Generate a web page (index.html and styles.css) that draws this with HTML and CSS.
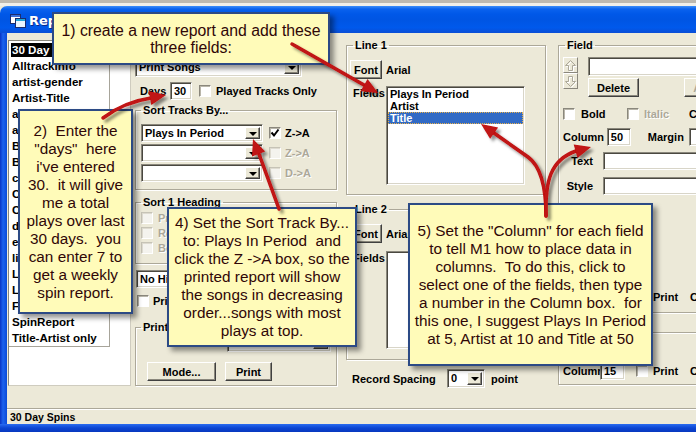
FILE: index.html
```html
<!DOCTYPE html>
<html lang="en">
<head>
	<meta charset="utf-8">
	<title>Reports</title>
	<link rel="stylesheet" href="styles.css">
</head>
<body>
	<div class="desk"></div>

	<div class="window">
		<div class="titlebar">
			<svg class="app-icon" width="16" height="16" viewBox="0 0 16 16">
				<rect x="0.5" y="2.5" width="10" height="9" fill="#fff" stroke="#1b2d6e"/>
				<rect x="1" y="3" width="9" height="2" fill="#3c6fd6"/>
				<rect x="5.5" y="6.5" width="10" height="9" fill="#eaf6ff" stroke="#1b2d6e"/>
				<rect x="6" y="7" width="9" height="2" fill="#23a7d9"/>
			</svg>
			<span class="caption">Reports</span>
		</div>

		<div class="frame">
			<div class="client">
				<div class="main">

					<!-- saved reports -->
					<div class="report-pane">
						<ul class="report-list">
							<li class="sel">30 Day Spins</li>
							<li>Alltrackinfo</li>
							<li>artist-gender</li>
							<li>Artist-Title</li>
							<li>album-list</li>
							<li>artist-count</li>
							<li>Best of Year</li>
							<li>BPM List</li>
							<li>catalog</li>
							<li>Category</li>
							<li>Count by Artist</li>
							<li>daily-log</li>
							<li>era-list</li>
							<li>likes</li>
							<li>Last Played</li>
							<li>Length</li>
							<li>Full Info</li>
							<li>SpinReport</li>
							<li>Title-Artist only</li>
						</ul>
					</div>

					<!-- what to print / sorting -->
					<div class="col-sort">
						<div class="combo w-songs"><span class="val">Print Songs</span><i class="drop"></i></div>

						<div class="days-row">
							<span class="lbl-days">Days</span>
							<span class="edit w-days">30</span>
							<span class="check"></span>
							<span class="cap">Played Tracks Only</span>
						</div>

						<fieldset class="grp grp-sort">
							<legend>Sort Tracks By...</legend>
							<div class="sort-row">
								<div class="combo w-sort"><span class="val">Plays In Period</span><i class="drop"></i></div>
								<span class="check on"><svg width="10" height="10" viewBox="0 0 10 10"><polyline points="1.5,4.5 4,7.5 8.5,1.5" fill="none" stroke="#000" stroke-width="2"/></svg></span>
								<span class="cap">Z-&gt;A</span>
							</div>
							<div class="sort-row">
								<div class="combo w-sort"><span class="val"></span><i class="drop"></i></div>
								<span class="check off"></span>
								<span class="cap dis">Z-&gt;A</span>
							</div>
							<div class="sort-row">
								<div class="combo w-sort"><span class="val"></span><i class="drop"></i></div>
								<span class="check off"></span>
								<span class="cap dis">D-&gt;A</span>
							</div>
						</fieldset>

						<fieldset class="grp grp-head">
							<legend>Sort 1 Heading</legend>
							<div class="chk-row"><span class="check off"></span><span class="cap dis">Print heading</span></div>
							<div class="chk-row"><span class="check off"></span><span class="cap dis">Repeat on page</span></div>
							<div class="chk-row"><span class="check off"></span><span class="cap dis">Box heading</span></div>
						</fieldset>

						<div class="combo w-hilite"><span class="val">No Highlight</span><i class="drop"></i></div>

						<div class="chk-row totals"><span class="check"></span><span class="cap">Print Totals</span></div>

						<fieldset class="grp grp-print">
							<legend>Print Range</legend>
							<div class="print-top">
								<div class="combo w-printer"><span class="val"></span><i class="drop"></i></div>
							</div>
							<div class="btn-row">
								<span class="btn w-mode">Mode...</span>
								<span class="btn w-print">Print</span>
							</div>
						</fieldset>
					</div>

					<!-- report lines -->
					<div class="col-lines">
						<fieldset class="grp grp-line line-1">
							<legend>Line 1</legend>
							<div class="font-row">
								<span class="btn w-font">Font</span>
								<span class="cap font-name">Arial</span>
							</div>
							<div class="fields-row">
								<span class="lbl-fields">Fields</span>
								<ul class="lst">
									<li>Plays In Period</li>
									<li>Artist</li>
									<li class="sel">Title</li>
								</ul>
							</div>
						</fieldset>

						<fieldset class="grp grp-line line-2">
							<legend>Line 2</legend>
							<div class="font-row">
								<span class="btn w-font">Font</span>
								<span class="cap font-name">Arial</span>
							</div>
							<div class="fields-row">
								<span class="lbl-fields">Fields</span>
								<ul class="lst"></ul>
							</div>
						</fieldset>

						<div class="spacing-row">
							<span class="lbl-spacing">Record Spacing</span>
							<div class="combo w-spacing"><span class="val">0</span><i class="drop"></i></div>
							<span class="cap unit">point</span>
						</div>
					</div>

					<!-- selected field -->
					<div class="col-field">
						<fieldset class="grp grp-field">
							<legend>Field</legend>
							<div class="row-a">
								<div class="spin">
									<span class="spin-btn"><svg width="13" height="13" viewBox="0 0 13 13"><path d="M6.5 1.5 L11.5 6.5 H8.5 V11.5 H4.5 V6.5 H1.5 Z" fill="none" stroke="#fff" transform="translate(1 1)"/><path d="M6.5 1.5 L11.5 6.5 H8.5 V11.5 H4.5 V6.5 H1.5 Z" fill="none" stroke="#aca899"/></svg></span>
									<span class="spin-btn"><svg width="13" height="13" viewBox="0 0 13 13"><path d="M6.5 11.5 L11.5 6.5 H8.5 V1.5 H4.5 V6.5 H1.5 Z" fill="none" stroke="#fff" transform="translate(1 1)"/><path d="M6.5 11.5 L11.5 6.5 H8.5 V1.5 H4.5 V6.5 H1.5 Z" fill="none" stroke="#aca899"/></svg></span>
								</div>
								<div class="edit-stack">
									<span class="edit w-name"></span>
									<div class="btn-pair">
										<span class="btn w-delete">Delete</span>
										<span class="btn w-add">Add</span>
									</div>
								</div>
							</div>

							<div class="row-b">
								<span class="check"></span><span class="cap w-bold">Bold</span>
								<span class="check"></span><span class="cap dis w-italic">Italic</span>
								<span class="cap">Caps</span>
							</div>

							<div class="row-c">
								<span class="lbl w-col">Column</span>
								<span class="edit w-num">50</span>
								<span class="lbl w-margin">Margin</span>
								<span class="edit w-num"></span>
							</div>

							<div class="row-d">
								<span class="lbl w-side">Text</span>
								<span class="edit w-text"></span>
							</div>
							<div class="row-e">
								<span class="lbl w-side">Style</span>
								<span class="edit w-text"></span>
							</div>

							<div class="row-f">
								<span class="lbl w-clip"></span>
								<span class="edit w-num"></span>
								<span class="check"></span>
								<span class="cap w-prt">Print</span>
								<span class="cap">Caps</span>
							</div>
							<div class="sep"></div>
							<div class="sep sep-2"></div>
							<div class="row-g">
								<span class="lbl w-clip">Column</span>
								<span class="edit w-num">15</span>
								<span class="check"></span>
								<span class="cap w-prt">Print</span>
								<span class="cap">Caps</span>
							</div>
						</fieldset>
					</div>

				</div>
				<div class="status">30 Day Spins</div>
			</div>
		</div>
	</div>

	<!-- notes laid over the dialog -->
	<div class="note n1">1) create a new report and add these<br>three fields:</div>
	<div class="note n2">2)&nbsp; Enter the<br>"days"&nbsp; here<br>i've entered<br>30.&nbsp; it will give<br>me a total<br>plays over last<br>30 days.&nbsp; you<br>can enter 7 to<br>get a weekly<br>spin report.</div>
	<div class="note n4">4) Set the Sort Track By...<br>to: Plays In Period&nbsp; and<br>click the Z -&gt;A box, so the<br>printed report will show<br>the songs in decreasing<br>order...songs with most<br>plays at top.</div>
	<div class="note n5">5) Set the "Column" for each field<br>to tell M1 how to place data in<br>columns.&nbsp; To do this, click to<br>select one of the fields, then type<br>a number in the Column box.&nbsp; for<br>this one, I suggest Plays In Period<br>at 5, Artist at 10 and Title at 50</div>

	<svg class="marks" width="696" height="432" viewBox="0 0 696 432">
		<defs>
			<filter id="drop-sh" x="-10%" y="-10%" width="120%" height="120%">
				<feDropShadow dx="3" dy="3" stdDeviation="1.6" flood-color="#000" flood-opacity=".45"/>
			</filter>
		</defs>
		<g filter="url(#drop-sh)" fill="#c01212" stroke="#c01212" stroke-linecap="round" stroke-width="3.5">
			<!-- days -->
			<path d="M103,118 Q124,102 151,98" fill="none"/>
			<polygon points="166,95 151.3,104.9 148.7,91.1" stroke="none"/>
			<!-- fields -->
			<path d="M292,44 L364,85" fill="none"/>
			<polygon points="378,93 360.6,91.2 367.6,79" stroke="none"/>
			<!-- sort dropdown -->
			<path d="M279,209 L259,154" fill="none"/>
			<polygon points="253,139 265.1,151.6 252,156.4" stroke="none"/>
			<!-- title -->
			<path d="M546,216 Q546,170 528,157 L494,133" fill="none"/>
			<polygon points="481,124 498.1,127.4 490.1,138.8" stroke="none"/>
			<!-- column -->
			<path d="M546,216 C545,182 550,160 576,151" fill="none"/>
			<polygon points="591,147 577.5,158 573.7,144.6" stroke="none"/>
		</g>
	</svg>
</body>
</html>
```

FILE: styles.css
```css
/* global */
* { box-sizing: border-box; }
html, body { margin: 0; }
body {
	position: relative;
	width: 696px;
	height: 432px;
	overflow: hidden;
	background: #ece9d8;
	color: #000;
	font-family: "Liberation Sans", Arial, sans-serif;
	font-size: 11px;
	font-weight: bold;
	white-space: nowrap;
}
ul { list-style: none; margin: 0; padding: 0; }

/* window chrome */
.desk { height: 6px; background: linear-gradient(#bdb9b0 0, #bdb9b0 3px, #f1efe8 3px); }
.window { display: flex; flex-direction: column; height: 426px; }
.titlebar {
	display: flex;
	align-items: center;
	flex: none;
	height: 27px;
	padding: 1px 0 0 10px;
	border-radius: 7px 0 0 0;
	background: linear-gradient(#3d8ef8 0, #0a62ee 3px, #0058e8 8px, #0055e3 50%, #0059ec 80%, #0a4ed6 100%);
	color: #fff;
}
.titlebar .app-icon { margin-right: 3px; }
.titlebar .caption {
	font-family: "DejaVu Sans", sans-serif;
	font-size: 13px;
	font-weight: bold;
	text-shadow: 1px 1px #0b2a8c;
}
.frame {
	display: flex;
	flex: 1;
	padding: 0 0 8px 7px;
	background:
		linear-gradient(transparent calc(100% - 8px), #2a6cf0 calc(100% - 8px), #0b45d2 calc(100% - 4px), #0838bf 100%),
		linear-gradient(90deg, #0833c4 0, #1c63ee 3px, #0a4ad8 7px);
}
.client { display: flex; flex-direction: column; flex: 1; overflow: hidden; background: #ece9d8; }
.main { display: flex; align-items: flex-start; flex: 1; }
.status {
	flex: none;
	height: 16px;
	padding: 1px 0 0 3px;
	border-top: 1px solid #aca899;
	box-shadow: inset 0 1px 0 #fff;
	font-size: 10.5px;
	line-height: 14px;
}

/* controls */
.cap { line-height: 12px; }
.cap.dis, .lbl.dis { color: #aca899; text-shadow: 1px 1px #fff; }
.lbl { line-height: 12px; }

.edit, .combo, .lst {
	background: #fff;
	border: 1px solid;
	border-color: #8a877c #fff #fff #8a877c;
	box-shadow: inset 1px 1px 0 #4a4840, inset -1px -1px 0 #d8d5c8;
}
.edit { display: block; height: 18px; padding: 2px 0 0 3px; line-height: 13px; }

.combo { display: flex; align-items: stretch; height: 18px; padding: 2px; }
.combo .val { flex: 1; padding-left: 1px; line-height: 13px; overflow: hidden; }
.combo .drop {
	display: flex;
	align-items: center;
	justify-content: center;
	width: 15px;
	background: #ece9d8;
	border: 1px solid;
	border-color: #fff #404040 #404040 #fff;
	box-shadow: inset -1px -1px 0 #8a877c;
}
.combo .drop:after {
	content: "";
	border: 4px solid transparent;
	border-top: 4px solid #000;
	border-bottom: 0;
	margin-top: 1px;
}

.check {
	display: inline-flex;
	align-items: center;
	justify-content: center;
	flex: none;
	width: 12px;
	height: 12px;
	background: #fff;
	border: 1px solid;
	border-color: #8a877c #fff #fff #8a877c;
	box-shadow: inset 1px 1px 0 #b9b6aa;
}
.check.off { background: #f4f3ee; border-color: #c6c3b6 #fff #fff #c6c3b6; box-shadow: inset 1px 1px 0 #dedbd0; }

.btn {
	display: flex;
	align-items: center;
	justify-content: center;
	height: 19px;
	background: #ece9d8;
	border: 1px solid;
	border-color: #fff #404040 #404040 #fff;
	box-shadow: inset -1px -1px 0 #8a877c;
}

/* group boxes */
fieldset.grp {
	min-width: 0;
	margin: 0;
	border: 1px solid #aca899;
	box-shadow: inset 1px 1px 0 #fff, 1px 1px 0 #fff;
}
fieldset.grp legend { padding: 0 2px; line-height: 12px; }

/* report list */
.report-pane {
	flex: none;
	width: 123px;
	height: 346px;
	margin: 7px 0 0 1px;
	background: #fff;
	border: 1px solid;
	border-color: #8a877c #cfccbf #cfccbf #8a877c;
}
.report-list {
	width: 101px;
	padding-top: 1px;
	border-right: 1px solid #a7a49a;
	border-bottom: 1px solid #a7a49a;
	font-size: 11.6px;
}
.report-list li { height: 16px; margin: 0 1px; padding-left: 2px; line-height: 16px; overflow: hidden; }
.report-list li.sel { background: #000; color: #fff; box-shadow: inset 0 0 0 1px #fff; }

/* sort column */
.col-sort { flex: none; width: 203px; margin-left: 4px; }
.col-sort .w-songs { width: 167px; height: 19px; margin-top: 25px; }
.days-row { display: flex; align-items: center; height: 18px; margin-top: 5px; }
.days-row .lbl-days { width: 35px; padding-left: 5px; }
.days-row .w-days { width: 22px; }
.days-row .check { margin-left: 7px; }
.days-row .cap { margin-left: 5px; }

.grp-sort { width: 202px; margin-top: 4px !important; padding: 8px 5px 7px; }
.sort-row { display: flex; align-items: center; height: 18px; }
.sort-row + .sort-row { margin-top: 2px; }
.sort-row .w-sort { width: 122px; }
.sort-row .check { margin-left: 6px; }
.sort-row .cap { margin-left: 4px; }

.grp-head { width: 202px; margin-top: 6px !important; padding: 4px 5px 9px; }
.chk-row { display: flex; align-items: center; height: 12px; }
.grp-head .chk-row + .chk-row { margin-top: 3px; }
.chk-row .cap { margin-left: 5px; }

.col-sort .w-hilite { width: 165px; margin: 6px 0 0 1px; }
.chk-row.totals { margin: 7px 0 0 2px; }
.chk-row.totals .cap { margin-left: 4px; }

.grp-print { width: 202px; margin-top: 14px !important; padding: 0 5px 4px; }
.print-top { display: flex; align-items: center; justify-content: flex-end; height: 19px; }
.print-top .w-printer { width: 104px; height: 19px; }
.btn-row { display: flex; margin-top: 10px; }
.btn-row .w-mode { width: 69px; margin-left: 6px; }
.btn-row .w-print { width: 47px; margin-left: 9px; }

/* lines column */
.col-lines { flex: none; width: 200px; margin-left: 8px; }
.grp-line { width: 200px; padding: 9px 0 9px 3px; }
.grp-line legend { margin-left: 3px; }
.line-1 { margin-top: 6px !important; }
.line-2 { margin-top: 8px !important; padding-bottom: 10px; }
.font-row { display: flex; align-items: center; height: 19px; }
.font-row .w-font { width: 32px; }
.font-row .font-name { margin-left: 4px; }
.fields-row { display: flex; margin-top: 7px; }
.line-2 .fields-row { margin-top: 8px; }
.lbl-fields { width: 36px; padding: 1px 0 0 3px; line-height: 12px; }
.lst { width: 139px; height: 99px; padding-top: 1px; }
.line-2 .lst { height: 98px; }
.lst li { height: 12px; margin: 0 1px; padding-left: 2px; line-height: 12px; }
.lst li.sel { background: #316ac5; color: #fff; outline: 1px dotted #e8b04c; outline-offset: -1px; }

.spacing-row { display: flex; align-items: center; height: 19px; margin-top: 9px; }
.spacing-row .lbl-spacing { width: 101px; padding-left: 6px; }
.spacing-row .w-spacing { width: 38px; height: 19px; }
.spacing-row .unit { margin-left: 6px; }

/* field column */
.col-field { flex: none; width: 170px; margin-left: 12px; }
.grp-field { width: 170px; margin-top: 6px !important; padding: 6px 0 4px 4px; }
.grp-field legend { margin-left: 2px; }
.row-a { display: flex; height: 40px; }
.spin { display: flex; flex-direction: column; width: 17px; }
.spin-btn {
	display: flex;
	align-items: center;
	justify-content: center;
	height: 16px;
	background: #ece9d8;
	border: 1px solid;
	border-color: #fff #8a877c #8a877c #fff;
}
.edit-stack { margin-left: 10px; }
.edit-stack .w-name { width: 140px; height: 19px; }
.btn-pair { display: flex; margin-top: 2px; }
.btn-pair .w-delete { width: 51px; }
.btn-pair .w-add { width: 40px; margin-left: 45px; color: #aca899; }

.row-b { display: flex; align-items: center; height: 12px; margin-top: 11px; }
.row-b .w-bold { width: 52px; padding-left: 6px; }
.row-b .w-italic { width: 50px; padding-left: 5px; }
.row-c, .row-d, .row-e, .row-f, .row-g { display: flex; align-items: center; height: 18px; }
.row-c { margin-top: 8px; }
.row-c .w-col { width: 46px; }
.row-c .w-num { width: 25px; }
.row-c .w-margin { width: 43px; margin-left: 17px; }
.row-c .edit:last-child { width: 40px; }
.row-d { margin-top: 6px; }
.row-e { margin-top: 7px; }
.w-side { width: 40px; padding-right: 10px; text-align: right; }
.w-text { width: 120px; }
.row-f { margin-top: 93px; }
.row-g { margin-top: 28px; }
.w-clip { width: 37px; overflow: hidden; }
.row-f .w-num, .row-g .w-num { width: 25px; }
.row-f .check, .row-g .check { margin-left: 11px; }
.w-prt { width: 42px; padding-left: 5px; }
.sep { height: 2px; margin: 6px 0 0 -5px; border-top: 1px solid #aca899; border-bottom: 1px solid #fff; }
.sep-2 { margin-top: 18px; }

/* notes */
.note {
	position: absolute;
	display: flex;
	flex-direction: column;
	justify-content: center;
	align-items: center;
	background: #fffbb9;
	border: 2px solid #2c4a85;
	box-shadow: 4px 4px 5px rgba(0,0,0,.42);
	color: #300707;
	font-family: "Liberation Sans", Arial, sans-serif;
	font-weight: normal;
	font-size: 15.3px;
	line-height: 18px;
	text-align: center;
}
.n1 { left: 52px; top: 12px; width: 278px; height: 53px; font-size: 15.8px; line-height: 17px; }
.n2 { left: 18px; top: 109px; width: 115px; height: 205px; }
.n4 { left: 167px; top: 207px; width: 190px; height: 140px; }
.n5 { left: 408px; top: 203px; width: 245px; height: 163px; }

.marks { position: absolute; left: 0; top: 0; pointer-events: none; }
```
